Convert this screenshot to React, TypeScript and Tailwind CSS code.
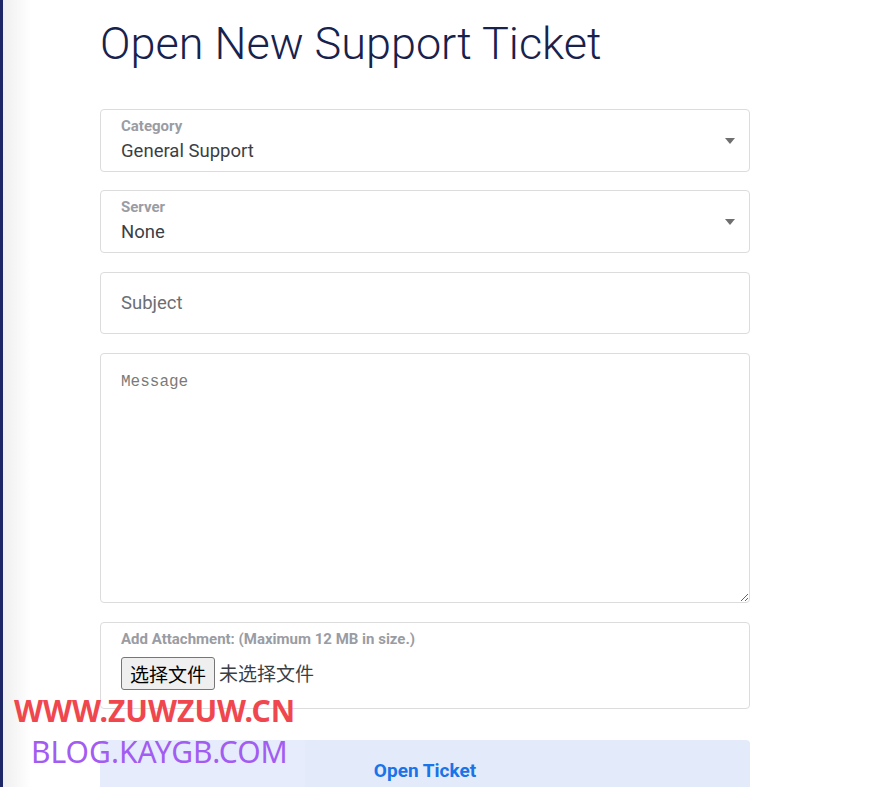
import { useState } from 'react'

function SelectField({ label, value, className = '' }: { label: string; value: string; className?: string }) {
  return (
    <div className={`relative h-[63px] rounded-[4px] border border-[#dcdcdc] bg-white px-5 pt-[7px] ${className}`}>
      <div className="text-[15px] font-bold leading-[18px] text-[#9a9ca3]">{label}</div>
      <div className="mt-[4px] text-[18.5px] leading-[24px] text-[#3b3f45]">{value}</div>
      <span className="absolute right-[14px] top-[28px] h-0 w-0 border-x-[5px] border-t-[6px] border-x-transparent border-t-[#6f6f6f]" />
    </div>
  )
}

export default function App() {
  const [subject, setSubject] = useState('')
  const [message, setMessage] = useState('')

  return (
    <div className="relative min-h-[787px] w-full overflow-hidden bg-white font-['Roboto',sans-serif]">
      {/* left edge */}
      <div className="absolute left-0 top-0 flex h-full">
        <div className="h-full w-[3px] bg-[#1d2766]" />
        <div className="h-full w-[28px] bg-gradient-to-r from-[#efefef] to-white" />
      </div>

      <div className="ml-[100px] w-[650px] pt-[14px]">
        <h1 className="text-[45px] font-light leading-[60px] text-[#17224d]">
          Open New Support Ticket
        </h1>

        <form className="mt-[35px] flex flex-col" onSubmit={(e) => e.preventDefault()}>
          <SelectField label="Category" value="General Support" />
          <SelectField label="Server" value="None" className="mt-[18px]" />

          <input
            value={subject}
            onChange={(e) => setSubject(e.target.value)}
            placeholder="Subject"
            className="mt-[19px] h-[62px] rounded-[4px] border border-[#dcdcdc] px-5 text-[18.5px] text-[#3b3f45] outline-none placeholder:text-[#6b6f75]"
          />

          <textarea
            value={message}
            onChange={(e) => setMessage(e.target.value)}
            placeholder="Message"
            className="mt-[19px] h-[250px] resize-y rounded-[4px] border border-[#dcdcdc] px-5 pt-[17px] font-['Liberation_Mono',monospace] text-[16px] leading-[22px] text-[#3b3f45] outline-none placeholder:text-[#7a7a7a]"
          />

          <div className="mt-[19px] h-[87px] rounded-[4px] border border-[#dcdcdc] px-5 pt-[6px]">
            <div className="text-[15px] font-bold leading-[20px] text-[#9a9ca3]">
              Add Attachment: (Maximum 12 MB in size.)
            </div>
            <div className="mt-[8px] flex items-center gap-[4px] font-['Noto_Sans_CJK_SC',sans-serif] text-[19px] text-[#3b3f45]">
              <button
                type="button"
                className="h-[33px] rounded-[3px] border border-[#767676] bg-[#efefef] px-[8px] leading-[31px] text-black"
              >
                选择文件
              </button>
              <span>未选择文件</span>
            </div>
          </div>

          <button
            type="submit"
            className="mt-[31px] h-[60px] rounded-[4px] bg-[#e3eafa] pt-[2px] text-[19px] font-bold text-[#1a73e8]"
          >
            Open Ticket
          </button>
        </form>
      </div>

      {/* watermark */}
      <div className="pointer-events-none absolute left-[14px] top-[693px] font-['Noto_Sans',sans-serif] text-[30px] font-bold leading-[36px] text-[#f0474f]">
        WWW.ZUWZUW.CN
      </div>
      <div className="pointer-events-none absolute left-[31px] top-[734px] h-[53px] w-[274px] bg-white/10 font-['Noto_Sans',sans-serif] text-[30px] leading-[36px] text-[#a35cf2]">
        BLOG.KAYGB.COM
      </div>
    </div>
  )
}
